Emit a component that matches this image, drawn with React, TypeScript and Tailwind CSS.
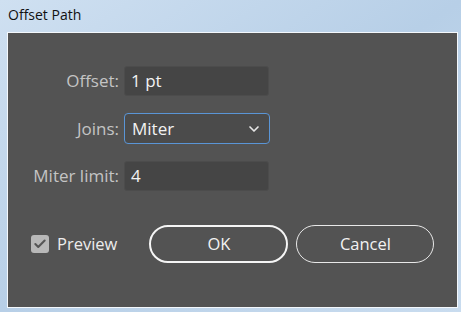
import { ChevronDown, Check } from "lucide-react";

const font = { fontFamily: '"Open Sans", "Noto Sans", sans-serif' };

function Field({ label, children }: { label: string; children: React.ReactNode }) {
  return (
    <div className="flex items-center">
      <div className="w-[108px] pr-[5px] text-right text-[17px] text-[#c4c4c4]">{label}</div>
      {children}
    </div>
  );
}

export default function App() {
  return (
    <div
      className="relative h-[312px] w-[461px] overflow-hidden bg-gradient-to-br from-[#cfe0f1] via-[#b7cfe7] to-[#c9dcef] pt-[32px] pl-[7px] pr-[3px]"
      style={font}
    >
      {/* title */}
      <div className="absolute left-[8px] top-[4px] text-[14px] text-[#111]">Offset Path</div>

      {/* dialog body */}
      <div className="h-[276px] w-[451px] border border-[#f4f8fc] bg-[#535353]">
        <div className="flex flex-col gap-[17px] pt-[33px] pl-[8px]">
          <Field label="Offset:">
            <div className="flex h-[30px] w-[145px] items-center rounded-[3px] border border-[#4c4c4c] bg-[#454545] pl-[6px] text-[17px] text-[#f2f2f2]">
              1 pt
            </div>
          </Field>
          <Field label="Joins:">
            <div className="flex h-[31px] w-[146px] items-center justify-between rounded-[4px] border-[1.5px] border-[#5a95d6] bg-[#4b4b4b] pl-[7px] pr-[7px] text-[17px] text-[#f2f2f2]">
              <span>Miter</span>
              <ChevronDown size={16} strokeWidth={2.5} className="text-[#e6e6e6]" />
            </div>
          </Field>
          <Field label="Miter limit:">
            <div className="flex h-[30px] w-[145px] items-center rounded-[3px] border border-[#4c4c4c] bg-[#454545] pl-[6px] text-[17px] text-[#f2f2f2]">
              4
            </div>
          </Field>
        </div>

        <div className="mt-[34px] flex items-center pl-[23px]">
          <div className="flex items-center">
            <div className="flex h-[18px] w-[18px] items-center justify-center rounded-[3px] bg-[#b8b8b8]">
              <Check size={14} strokeWidth={3.5} className="text-[#555]" />
            </div>
            <span className="ml-[8px] text-[16.5px] text-[#ececec]">Preview</span>
          </div>
          <button className="ml-[32px] h-[38px] w-[139px] rounded-full border-[2.5px] border-[#f5f5f5] text-[16.5px] text-[#f2f2f2]">
            OK
          </button>
          <button className="ml-[8px] h-[38px] w-[138px] rounded-full border-[1.5px] border-[#e8e8e8] text-[16.5px] text-[#f2f2f2]">
            Cancel
          </button>
        </div>
      </div>
    </div>
  );
}
